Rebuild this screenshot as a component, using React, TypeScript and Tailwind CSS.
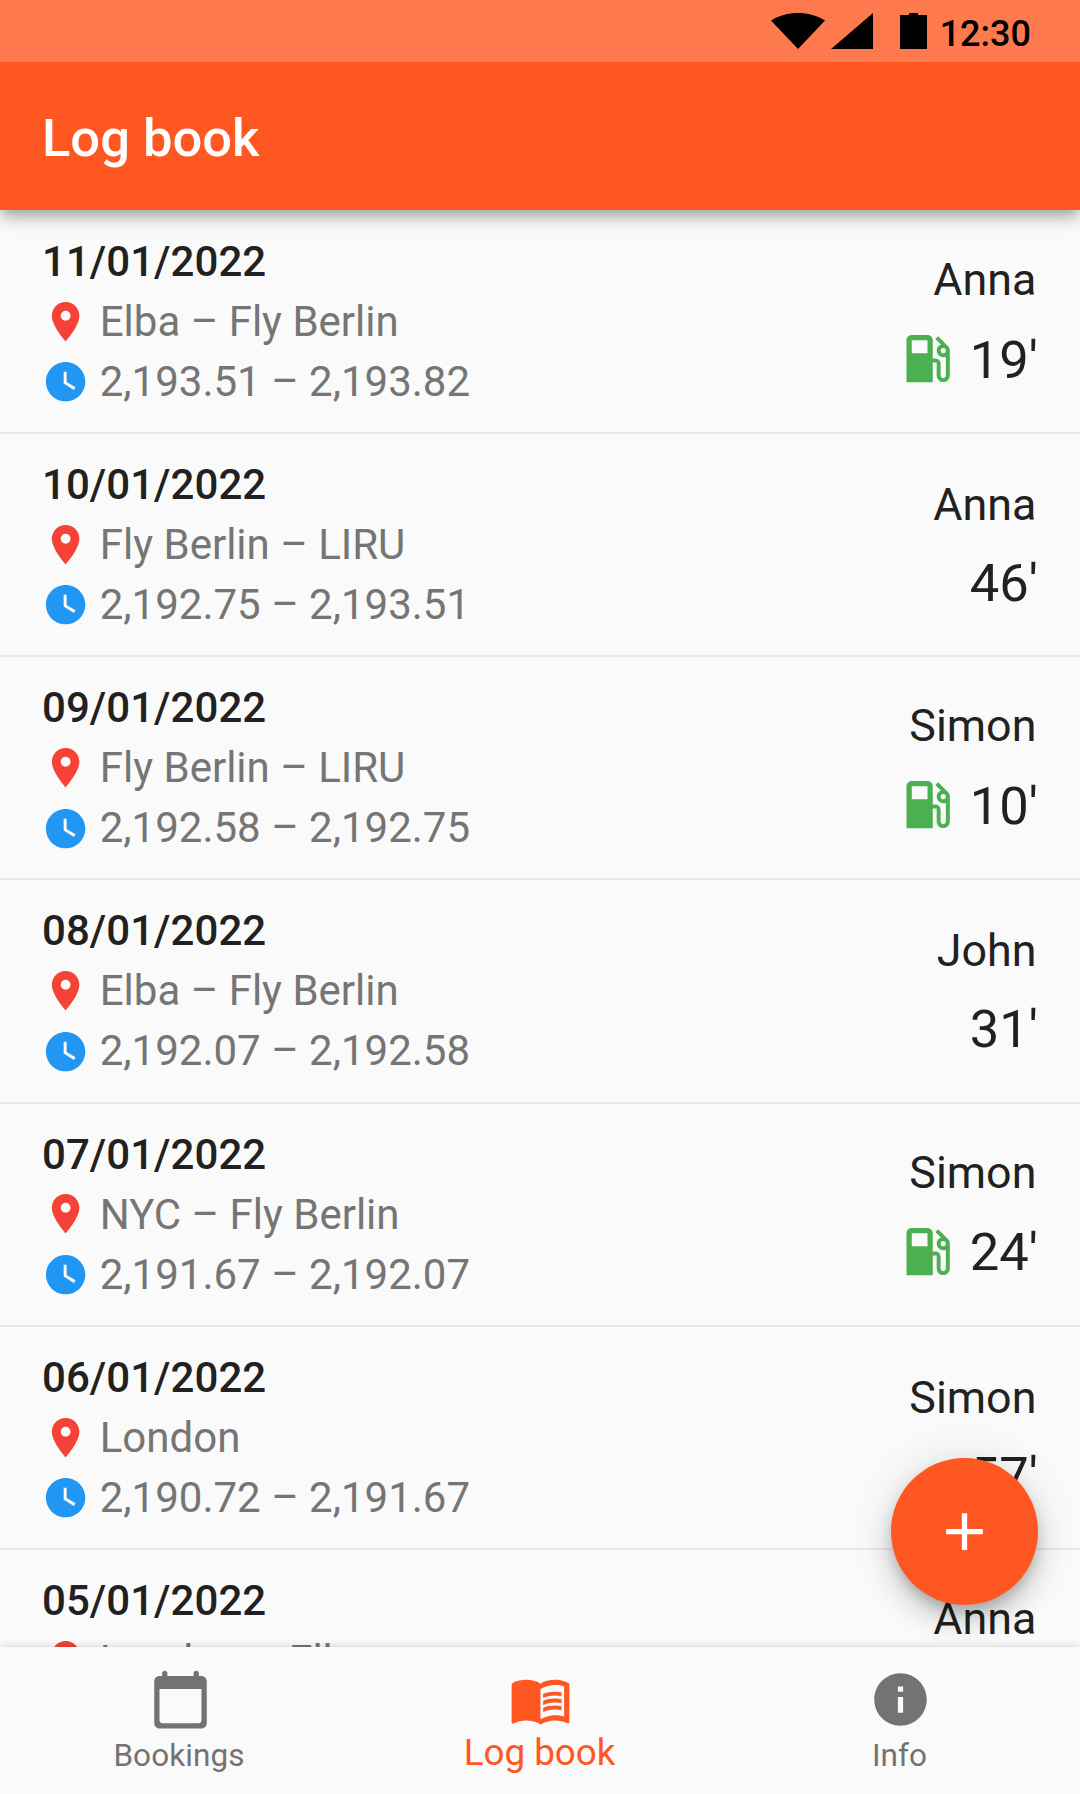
import React from "react";
import { MdAdd, MdInfo, MdLocalGasStation, MdMenuBook, MdPlace, MdWatchLater } from "react-icons/md";

type Entry = {
  date: string;
  route: string;
  hours: string;
  pilot: string;
  duration: string;
  fuel?: boolean;
};

const entries: Entry[] = [
  { date: "11/01/2022", route: "Elba – Fly Berlin", hours: "2,193.51 – 2,193.82", pilot: "Anna", duration: "19'", fuel: true },
  { date: "10/01/2022", route: "Fly Berlin – LIRU", hours: "2,192.75 – 2,193.51", pilot: "Anna", duration: "46'" },
  { date: "09/01/2022", route: "Fly Berlin – LIRU", hours: "2,192.58 – 2,192.75", pilot: "Simon", duration: "10'", fuel: true },
  { date: "08/01/2022", route: "Elba – Fly Berlin", hours: "2,192.07 – 2,192.58", pilot: "John", duration: "31'" },
  { date: "07/01/2022", route: "NYC – Fly Berlin", hours: "2,191.67 – 2,192.07", pilot: "Simon", duration: "24'", fuel: true },
  { date: "06/01/2022", route: "London", hours: "2,190.72 – 2,191.67", pilot: "Simon", duration: "57'" },
  { date: "05/01/2022", route: "London – Elba", hours: "2,190.30 – 2,190.72", pilot: "Anna", duration: "25'", fuel: true },
];

function StatusBar() {
  return (
    <div className="relative z-20 flex h-[62px] shrink-0 items-start justify-end bg-[#ff794e] pr-[49px]">
      <svg className="mt-[13px] h-9 w-[54px]" viewBox="0 0 54 36">
        <path d="M27 36 0 7.5C8 2.5 17 0 27 0s19 2.500 27 7.500z" />
      </svg>
      <svg className="mt-[13px] ml-[6px] h-9 w-[42px]" viewBox="0 0 42 36">
        <path d="M0 36 42 0v36z" />
      </svg>
      <svg className="mt-[13px] ml-[27px] h-9 w-[27px]" viewBox="0 0 27 36">
        <path d="M9 0h9v2h9v34H0V2h9z" />
      </svg>
      <span className="ml-[13px] text-[36px] leading-[68px] font-medium text-black">12:30</span>
    </div>
  );
}

function LogRow({ entry }: { entry: Entry }) {
  return (
    <li className="flex h-[223.2px] shrink-0 justify-between border-b-2 border-[#e8e8e8] px-[42px]">
      <div className="pt-[24px] text-[42px]">
        <div className="leading-[54px] font-medium tracking-[0.05px] text-[#212121]">{entry.date}</div>
        <div className="mt-[3px] flex h-[60px] items-center gap-[10.5px] leading-[60px] text-[#757575]">
          <MdPlace className="-mt-px size-[47.25px] text-[#f44336]" />
          {entry.route}
        </div>
        <div className="flex h-[60px] items-center gap-[10.5px] leading-[60px] text-[#757575]">
          <MdWatchLater className="size-[47.25px] text-[#2196f3]" />
          {entry.hours}
        </div>
      </div>
      <div className={entry.fuel ? "flex flex-col items-end pt-[39.1px] text-[#212121]" : "flex flex-col items-end pt-[40.9px] text-[#212121]"}>
        <div className="pr-[1.6px] text-[44.8px] leading-[60px]">{entry.pilot}</div>
        <div className={entry.fuel ? "mt-[18.7px] flex items-center" : "mt-[16.9px] flex items-center"}>
          {entry.fuel && <MdLocalGasStation className="-mt-[3px] mr-[10.5px] size-[63px] text-[#4caf50]" />}
          <span className="text-[52.5px] leading-[63px]">{entry.duration}</span>
        </div>
      </div>
    </li>
  );
}

function CalendarIcon() {
  return (
    <svg viewBox="0 0 24 24" fill="currentColor" className="size-[63px]">
      <path d="M20 3h-1V2c0-.55-.45-1-1-1s-1 .45-1 1v1H7V2c0-.55-.45-1-1-1s-1 .45-1 1v1H4c-1.1 0-2 .9-2 2v16c0 1.100.9 2 2 2h16c1.100 0 2-.9 2-2V5c0-1.100-.9-2-2-2zm-1 18H5c-.55 0-1-.45-1-1V8h16v12c0 .55-.45 1-1 1z" />
    </svg>
  );
}

function BottomNav() {
  return (
    <nav className="relative grid h-[147px] shrink-0 grid-cols-3 bg-[#fafafa] text-[#737373] shadow-[0_0_8px_rgba(0,0,0,0.18)]">
      <div className="flex flex-col items-center pt-[21px]">
        <CalendarIcon />
        <span className="mt-[5px] pr-[2px] text-[31.5px] leading-[40px] tracking-[0.08px]">Bookings</span>
      </div>
      <div className="flex flex-col items-center pt-[21px] text-[#ff5722]">
        <MdMenuBook className="size-[63px]" />
        <span className="mt-px pr-px text-[36.75px] leading-[42px]">Log book</span>
      </div>
      <div className="flex flex-col items-center pt-[21px]">
        <MdInfo className="size-[63px]" />
        <span className="mt-[5px] pr-px text-[31.5px] leading-[40px]">Info</span>
      </div>
    </nav>
  );
}

export default function App() {
  return (
    <div className="relative flex h-[1794px] w-[1080px] flex-col overflow-hidden bg-[#fafafa] font-['Roboto',sans-serif]">
      <StatusBar />
      <header className="relative z-10 flex h-[148px] shrink-0 items-center bg-[#ff5722] pt-[3px] pl-[42px] shadow-[0_5px_10px_-3px_rgba(0,0,0,0.2),0_10px_13px_0_rgba(0,0,0,0.14),0_3px_26px_0_rgba(0,0,0,0.12)]">
        <h1 className="text-[52.5px] leading-[62px] font-medium text-white">Log book</h1>
      </header>
      <ul className="flex min-h-0 flex-1 flex-col overflow-hidden pt-[0.8px]">
        {entries.map((entry) => (
          <LogRow key={entry.date} entry={entry} />
        ))}
      </ul>
      <BottomNav />
      <button
        aria-label="Add entry"
        className="absolute right-[42px] bottom-[189px] flex size-[147px] items-center justify-center rounded-full bg-[#ff5722] text-white shadow-[0_8px_13px_-3px_rgba(0,0,0,0.2),0_16px_26px_0_rgba(0,0,0,0.14),0_3px_47px_0_rgba(0,0,0,0.12)]"
      >
        <MdAdd className="size-[63px]" />
      </button>
    </div>
  );
}
